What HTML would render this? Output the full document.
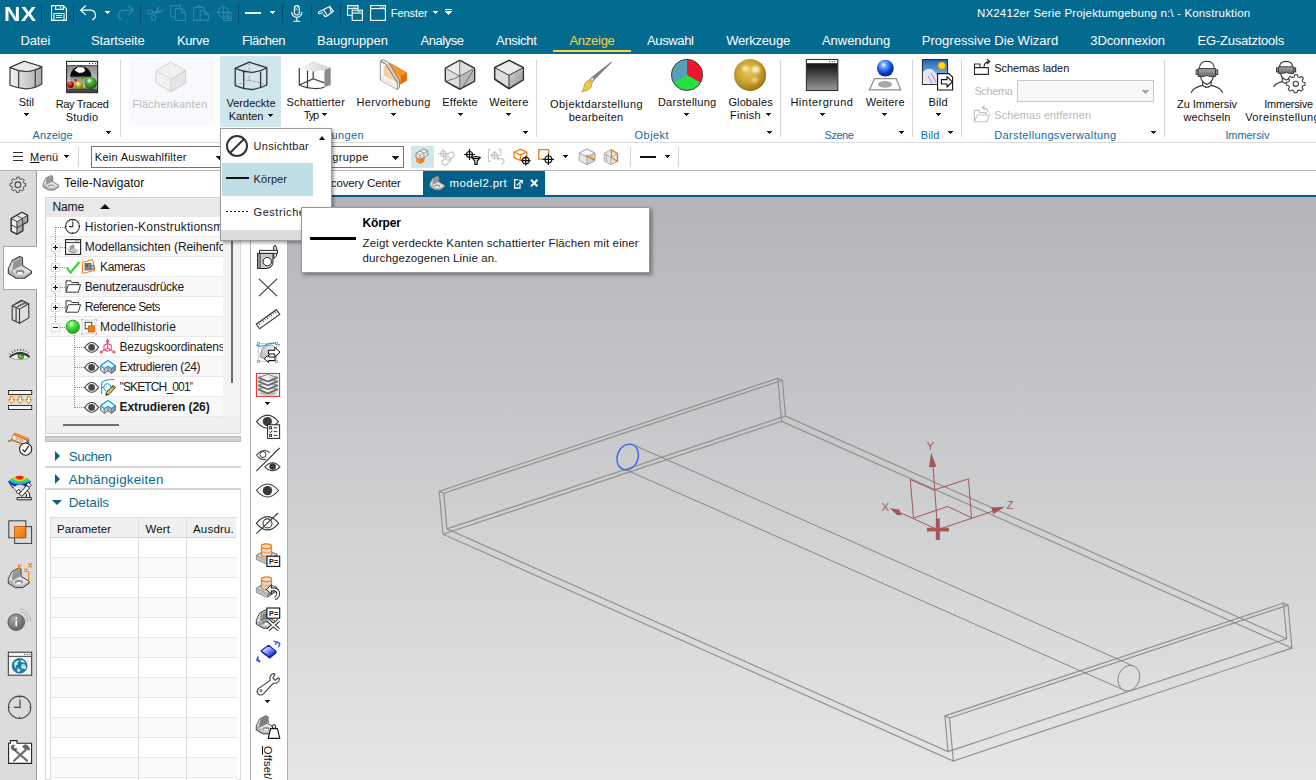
<!DOCTYPE html>
<html><head><meta charset="utf-8"><title>NX</title>
<style>
html,body{margin:0;padding:0;}
body{width:1316px;height:780px;overflow:hidden;position:relative;background:#fff;font-family:"Liberation Sans",sans-serif;}
.t{position:absolute;white-space:pre;line-height:20px;height:20px;font-family:"Liberation Sans",sans-serif;z-index:5;}
.a{position:absolute;}
svg{position:absolute;overflow:visible;}
.dn{position:absolute;width:5px;height:3px;z-index:5;background:linear-gradient(var(--c,#1a1a1a),var(--c,#1a1a1a)) 0 0/5px 1px no-repeat,linear-gradient(var(--c,#1a1a1a),var(--c,#1a1a1a)) 1px 1px/3px 1px no-repeat,linear-gradient(var(--c,#1a1a1a),var(--c,#1a1a1a)) 2px 2px/1px 1px no-repeat;}
.dn7{position:absolute;width:7px;height:4px;z-index:5;background:linear-gradient(var(--c,#1a1a1a),var(--c,#1a1a1a)) 0 0/7px 1px no-repeat,linear-gradient(var(--c,#1a1a1a),var(--c,#1a1a1a)) 1px 1px/5px 1px no-repeat,linear-gradient(var(--c,#1a1a1a),var(--c,#1a1a1a)) 2px 2px/3px 1px no-repeat,linear-gradient(var(--c,#1a1a1a),var(--c,#1a1a1a)) 3px 3px/1px 1px no-repeat;}
.vs{position:absolute;width:1px;background:#d4d4d4;top:60px;height:77px;}

</style></head>
<body>
<!-- header -->
<div class="a" style="left:0;top:0;width:1316px;height:54px;background:#036a90;"></div>
<div class="a" style="left:553px;top:50px;width:78px;height:2px;background:#fdd23e;"></div>
<!-- ribbon -->
<div class="a" style="left:0;top:54px;width:1316px;height:88px;background:#fff;"></div>
<div class="a" style="left:0;top:142px;width:1316px;height:1px;background:#dcdcdc;"></div>
<div class="a" style="left:129px;top:57px;width:86px;height:68px;background:#f8f9fd;"></div>
<div class="a" style="left:220px;top:56px;width:61px;height:71px;background:#cfe6ec;"></div>
<div class="vs" style="left:120px"></div><div class="vs" style="left:536px"></div><div class="vs" style="left:780px"></div>
<div class="vs" style="left:912px"></div><div class="vs" style="left:961px"></div><div class="vs" style="left:1164px"></div>
<!-- schema combobox -->
<div class="a" style="left:1017px;top:80px;width:137px;height:22px;border:1px solid #c8c8c8;background:#f7f7f7;box-sizing:border-box;"></div>
<div class="dn7" style="left:1142px;top:90px;--c:#a8a8a8;"></div>
<!-- toolbar row -->
<div class="a" style="left:78px;top:147px;width:1px;height:20px;background:#d4d4d4;"></div>
<div class="a" style="left:91px;top:146px;width:140px;height:22px;border:1px solid #747474;box-sizing:border-box;background:#fff;"></div>
<div class="a" style="left:300px;top:146px;width:104px;height:22px;border:1px solid #747474;box-sizing:border-box;background:#fff;"></div>
<div class="dn7" style="left:392px;top:156px;"></div>
<div class="dn7" style="left:216px;top:156px;"></div>
<div class="a" style="left:411px;top:146px;width:23px;height:22px;background:#cfe6ec;"></div>
<div class="a" style="left:630px;top:147px;width:1px;height:20px;background:#d4d4d4;"></div>
<div class="a" style="left:678px;top:147px;width:1px;height:20px;background:#d4d4d4;"></div>
<div class="a" style="left:640px;top:155.5px;width:16px;height:2.5px;background:#111;"></div>
<div class="dn" style="left:665px;top:155px;"></div>
<div class="dn" style="left:563px;top:155px;"></div>
<div class="dn" style="left:64px;top:155px;"></div>
<!-- hamburger -->
<div class="a" style="left:13px;top:152px;width:10px;height:1px;background:#333;"></div>
<div class="a" style="left:13px;top:156px;width:10px;height:1px;background:#333;"></div>
<div class="a" style="left:13px;top:160px;width:10px;height:1px;background:#333;"></div>
<!-- separator under toolbar -->
<div class="a" style="left:0;top:170px;width:1316px;height:1px;background:#b4b4b4;"></div>
<!-- left resource bar -->
<div class="a" style="left:0;top:171px;width:36px;height:609px;background:#dcdcdc;border-right:1px solid #9a9a9a;"></div>
<div class="a" style="left:3px;top:246px;width:34px;height:44px;background:#fff;border:1px solid #a8a8a8;border-right:none;box-sizing:border-box;"></div>
<!-- navigator -->
<div class="a" style="left:37px;top:171px;width:206px;height:609px;background:#fff;"></div>
<!-- tree widget -->
<div class="a" style="left:45px;top:197px;width:196px;height:237px;background:#f0f0f0;border:1px solid #d6d6d6;box-sizing:border-box;"></div>
<div class="a" style="left:46px;top:198px;width:194px;height:19px;background:#e9e9e9;border-bottom:1px solid #d0d0d0;"></div>
<div class="a" style="left:46px;top:217px;width:177px;height:200px;background:repeating-linear-gradient(to bottom,#fff 0,#fff 19px,#e9e9e9 19px,#e9e9e9 20px,#f8f8f8 20px,#f8f8f8 39px,#e9e9e9 39px,#e9e9e9 40px);"></div>
<div class="a" style="left:223px;top:217px;width:17px;height:200px;background:#f3f3f3;"></div>
<div class="a" style="left:231px;top:241px;width:2px;height:142px;background:#6e6e6e;"></div>
<div class="a" style="left:63px;top:424px;width:56px;height:2px;background:#6e6e6e;"></div>
<div class="a" style="left:45px;top:436px;width:196px;height:6px;background:#d2d2d2;border:1px solid #bdbdbd;box-sizing:border-box;"></div>
<!-- sort arrow -->
<div class="a" style="left:100px;top:204px;width:0;height:0;border-left:5px solid transparent;border-right:5px solid transparent;border-bottom:5px solid #111;"></div>
<!-- sections -->
<div class="a" style="left:45px;top:466px;width:196px;height:2px;background:#d6d6d6;"></div>
<div class="a" style="left:45px;top:488px;width:196px;height:2px;background:#d6d6d6;"></div>
<div class="a" style="left:45px;top:490px;width:196px;height:290px;border:1px solid #dcdcdc;border-top:none;box-sizing:border-box;"></div>
<div class="a" style="left:55px;top:451px;width:0;height:0;border-top:5px solid transparent;border-bottom:5px solid transparent;border-left:5px solid #0f5f85;"></div>
<div class="a" style="left:55px;top:474px;width:0;height:0;border-top:5px solid transparent;border-bottom:5px solid transparent;border-left:5px solid #0f5f85;"></div>
<div class="a" style="left:52px;top:500px;width:0;height:0;border-left:5px solid transparent;border-right:5px solid transparent;border-top:5px solid #0f5f85;"></div>
<!-- details table -->
<div class="a" style="left:50px;top:517px;width:187px;height:263px;border:1px solid #dedede;border-bottom:none;border-right:none;box-sizing:border-box;
 background:repeating-linear-gradient(to bottom,#fff 0,#fff 19px,#e9e9e9 19px,#e9e9e9 20px,#fafafa 20px,#fafafa 39px,#e9e9e9 39px,#e9e9e9 40px);background-position:0 20px;"></div>
<div class="a" style="left:51px;top:518px;width:185px;height:19px;background:#f0f0f0;border-bottom:1px solid #d6d6d6;"></div>
<div class="a" style="left:138px;top:518px;width:1px;height:262px;background:#dedede;"></div>
<div class="a" style="left:186px;top:518px;width:1px;height:262px;background:#dedede;"></div>
<!-- gap + vertical toolbar -->
<div class="a" style="left:243px;top:171px;width:7px;height:609px;background:#fff;"></div>
<div class="a" style="left:250px;top:171px;width:37px;height:609px;background:#fff;border-left:1px solid #b0b0b0;box-sizing:border-box;"></div>
<div class="a" style="left:287px;top:197px;width:1px;height:583px;background:#f0a070;"></div>
<!-- tab row -->
<div class="a" style="left:288px;top:171px;width:1028px;height:24px;background:#fff;"></div>
<div class="a" style="left:423px;top:171px;width:122px;height:25px;background:#015f88;"></div>
<div class="a" style="left:288px;top:195px;width:1028px;height:2px;background:#015f88;"></div>
<div class="a" style="left:288px;top:197px;width:1028px;height:1px;background:#f0a070;"></div>
<!-- viewport -->
<div class="a" id="vp" style="left:288px;top:198px;width:1028px;height:582px;background:linear-gradient(to bottom,#b3b5b8 0%,#e5e6e7 100%);"></div>
<!-- dropdown -->
<div class="a" style="left:220px;top:128px;width:112px;height:113px;background:#fff;border:1px solid #9a9a9a;box-sizing:border-box;z-index:20;box-shadow:2px 2px 3px rgba(0,0,0,0.35);"></div>
<div class="a" style="left:221px;top:230px;width:110px;height:10px;background:#dcdcdc;z-index:20;"></div>
<div class="a" style="left:222px;top:163px;width:91px;height:33px;background:#bfdfe7;z-index:20;"></div>
<div class="a" style="left:226px;top:177px;width:23px;height:2px;background:#111;z-index:21;"></div>
<div class="a" style="left:226px;top:211px;width:23px;height:1px;background:repeating-linear-gradient(to right,#222 0,#222 2px,transparent 2px,transparent 4px);z-index:21;"></div>
<div class="a" style="left:319px;top:136px;width:0;height:0;border-left:3.5px solid transparent;border-right:3.5px solid transparent;border-bottom:4px solid #111;z-index:21;"></div>
<svg style="left:225px;top:134px;z-index:21" width="24" height="24" viewBox="0 0 24 24"><circle cx="12" cy="12" r="10" fill="none" stroke="#333" stroke-width="2"/><line x1="5" y1="19" x2="19" y2="5" stroke="#333" stroke-width="2"/></svg>
<!-- tooltip -->
<div class="a" style="left:301px;top:207px;width:349px;height:66px;background:#fff;border:1px solid #9a9a9a;box-sizing:border-box;z-index:30;box-shadow:2px 2px 4px rgba(0,0,0,0.4);"></div>
<div class="a" style="left:310px;top:237px;width:46px;height:3px;background:#000;z-index:31;"></div>
<svg style="left:0;top:0;z-index:2" width="1316" height="780" viewBox="0 0 1316 780">
<g fill="none" stroke="#8e8e8e" stroke-width="1.15">
<polygon points="439.2,491.2 443.8,493.2 446.9,528.9 948.0,751.6 944.9,715.9 949.5,718.0 953.3,761.0 443.0,534.2"/>
<polygon points="777.8,378.3 782.4,380.3 785.5,416.0 1286.7,638.7 1283.5,603.0 1288.1,605.1 1291.9,648.1 781.6,421.3"/>
<line x1="439.2" y1="491.2" x2="777.8" y2="378.3"/>
<line x1="443.8" y1="493.2" x2="782.4" y2="380.3"/>
<line x1="446.9" y1="528.9" x2="785.5" y2="416.0"/>
<line x1="948.0" y1="751.6" x2="1286.7" y2="638.7"/>
<line x1="944.9" y1="715.9" x2="1283.5" y2="603.0"/>
<line x1="949.5" y1="718.0" x2="1288.1" y2="605.1"/>
<line x1="953.3" y1="761.0" x2="1291.9" y2="648.1"/>
<line x1="443.0" y1="534.2" x2="781.6" y2="421.3"/>
</g>
<g fill="none" stroke="#7d7d7d" stroke-width="0.9">
<line x1="634.2" y1="445.2" x2="1133.3" y2="666.0"/>
<line x1="625.6" y1="469.6" x2="1125.7" y2="690.9"/>
<ellipse cx="1128.8" cy="678.2" rx="10.6" ry="13.2" transform="rotate(20 1128.8 678.2)" stroke="#858585"/>
</g>
<ellipse cx="627.7" cy="457" rx="10.4" ry="13.2" transform="rotate(20 627.7 457)" fill="none" stroke="#2f63f0" stroke-width="1.3"/>
<g fill="none" stroke="#a45656" stroke-width="1">
<polyline points="910.3,479.5 933.8,490.0 968.5,478.9"/>
<polyline points="910.3,479.5 913.5,518.0 947.7,506.5 971.5,517.7 968.5,478.9"/>
<line x1="933.1" y1="467" x2="937.4" y2="527"/>
<line x1="900.5" y1="512.8" x2="937.7" y2="529.7"/>
<line x1="937.7" y1="529.7" x2="992.5" y2="511.3"/>
</g>
<g fill="#a45656" stroke="none">
<polygon points="931.2,452.8 929.0,467.2 936.4,466.8"/>
<polygon points="889.8,508.3 899.2,509.6 901.6,515.2 897,515.0"/>
<polygon points="1004.8,506.8 991.2,507.4 993.2,514.2"/>
<rect x="926.9" y="527.8" width="22" height="3.6"/>
<rect x="935.8" y="518.5" width="4" height="21.5"/>
</g>
</svg><!-- title bar icons -->
<div class="a" style="left:41px;top:4px;width:1px;height:19px;background:#034d6b;"></div>
<div class="a" style="left:73px;top:4px;width:1px;height:19px;background:#034d6b;"></div>
<div class="a" style="left:140px;top:4px;width:1px;height:19px;background:#034d6b;"></div>
<div class="a" style="left:238px;top:4px;width:1px;height:19px;background:#034d6b;"></div>
<div class="a" style="left:282px;top:4px;width:1px;height:19px;background:#034d6b;"></div>
<div class="a" style="left:311px;top:4px;width:1px;height:19px;background:#034d6b;"></div>
<div class="a" style="left:340px;top:4px;width:1px;height:19px;background:#034d6b;"></div>
<!-- save -->
<svg style="left:51px;top:5px" width="16" height="16" viewBox="0 0 16 16" fill="none" stroke="#fff" stroke-width="1.1">
<path d="M0.6 0.6H12.2L15.4 3.8V15.4H0.6Z"/><path d="M4.6 0.6V4.4H12.4V0.8"/><path d="M9.6 1.6V3.6" stroke-width="1"/><path d="M3 15.4V8.5H13V15.4"/><path d="M5 10.5H11M5 12.5H11" stroke-width="1"/></svg>
<!-- undo -->
<svg style="left:80px;top:5px" width="16" height="16" viewBox="0 0 16 16" fill="none" stroke="#fff" stroke-width="1.2" stroke-linecap="round" stroke-linejoin="round">
<path d="M5.4 0.8L0.8 5.2L5.4 9.6"/><path d="M1 5.2H10.4A5 5 0 0 1 12.8 14.6"/></svg>
<div class="dn" style="left:105px;top:11px;--c:#fff;"></div>
<!-- redo dim -->
<svg style="left:118px;top:5px" width="16" height="16" viewBox="0 0 16 16" fill="none" stroke="#3a8fb0" stroke-width="1.1" stroke-linecap="round" stroke-linejoin="round">
<path d="M10.6 0.8L15.2 5.2L10.6 9.6"/><path d="M15 5.2H5.6A5 5 0 0 0 3.2 14.6"/></svg>
<!-- scissors dim -->
<svg style="left:147px;top:5px" width="16" height="16" viewBox="0 0 16 16" fill="none" stroke="#2f88aa" stroke-width="1.1">
<ellipse cx="3" cy="7" rx="2.6" ry="2"/><ellipse cx="6.6" cy="12.6" rx="2" ry="2.6"/><path d="M5.4 7.2L15.4 5.6L9 9"/><path d="M7.4 10.2L12 0.8L9.6 8"/></svg>
<!-- copy dim -->
<svg style="left:170px;top:5px" width="16" height="16" viewBox="0 0 16 16" fill="none" stroke="#2f88aa" stroke-width="1.1">
<path d="M5.4 11.8H0.6V0.6H10.4V3"/><path d="M5.4 3.6H12L15.4 7V15.4H5.4Z"/><path d="M11.6 3.8V7.4H15.2"/></svg>
<!-- paste dim -->
<svg style="left:193px;top:5px" width="16" height="16" viewBox="0 0 16 16" fill="none" stroke="#2f88aa" stroke-width="1.1">
<path d="M7.2 15.4H0.6V2.6H10.8V5.6"/><path d="M3 2.6L4 1.2H5L5.8 0.4L6.6 1.2H7.6L8.6 2.6"/><path d="M7.2 5.8H12L15.4 9.2V15.4H7.2Z"/><path d="M11.8 6V9.4H15.2"/></svg>
<!-- target dim -->
<svg style="left:216px;top:5px" width="16" height="16" viewBox="0 0 16 16" fill="none" stroke="#2f88aa" stroke-width="1.1">
<circle cx="7.4" cy="7.4" r="5.2"/><path d="M7.4 0.2V12.6M0.2 7.4H12.6"/><path d="M7.6 7.6H15.4V15.4H7.6Z"/><path d="M9.6 9.6L13.4 13.4M13.4 10.6V13.4H10.6"/></svg>
<!-- line + arrow -->
<div class="a" style="left:245px;top:11.5px;width:16px;height:2.5px;background:#fff;"></div>
<div class="dn" style="left:270px;top:11px;--c:#fff;"></div>
<!-- mic -->
<svg style="left:289px;top:4.5px" width="16" height="17" viewBox="0 0 16 17" fill="none" stroke="#fff" stroke-width="1.1" stroke-linecap="round">
<rect x="5.3" y="0.6" width="5" height="9.4" rx="2.5"/><path d="M2.8 7.4A4.9 4.9 0 0 0 12.8 7.4"/><path d="M7.8 12.4V16M4.8 16.2H10.8"/><path d="M6.6 3h0.1M8.2 3h0.1M6.6 5h0.1M8.2 5h0.1M7.4 4h0.1" stroke-width="0.8"/></svg>
<!-- touch pen -->
<svg style="left:318px;top:6px" width="16" height="12" viewBox="0 0 16 12" fill="none" stroke="#fff" stroke-width="1.1" stroke-linejoin="round">
<path d="M5.6 3.4L11.8 0.6L15.4 5.2L9.2 9.8Z"/><path d="M11.8 0.8L13.2 6.8"/><path d="M5.8 3.6L1 5.8C-0.4 7 1 8.4 2.6 7.4L5 6.4"/><path d="M5.4 8.4L7.2 10.8L9.2 9.8"/></svg>
<!-- cascade windows -->
<svg style="left:347px;top:5px" width="16" height="16" viewBox="0 0 16 16" fill="none" stroke="#fff" stroke-width="1.1">
<path d="M5 10.2H0.6V0.6H11V5"/><path d="M0.6 3.4H11"/><rect x="5.2" y="5.2" width="10.2" height="10.2"/><path d="M5.2 8H15.4"/><path d="M6.2 2h3M10.6 6.6h3.4" stroke-width="0.9" stroke-dasharray="1 0.6"/></svg>
<!-- window -->
<svg style="left:370px;top:5px" width="16" height="16" viewBox="0 0 16 16" fill="none" stroke="#fff" stroke-width="1.1">
<rect x="0.6" y="0.6" width="14.8" height="14.8"/><path d="M0.6 3.6H15.4"/><path d="M9.8 2.2h4.2" stroke-width="0.9" stroke-dasharray="1 0.6"/></svg>
<div class="dn" style="left:433px;top:11px;--c:#fff;"></div>
<div class="a" style="left:445px;top:9px;width:7px;height:1px;background:#fff;"></div>
<div class="dn7" style="left:445px;top:11px;--c:#fff;"></div>
<svg style="left:0;top:0;z-index:3" width="1316" height="780" viewBox="0 0 1316 780">
<defs>
<linearGradient id="gBlk" x1="0" y1="0" x2="1" y2="0"><stop offset="0" stop-color="#f4f4f4"/><stop offset="1" stop-color="#ababab"/></linearGradient>
<linearGradient id="gTop" x1="0" y1="0" x2="1" y2="0"><stop offset="0" stop-color="#f6f6f6"/><stop offset="1" stop-color="#d2d2d2"/></linearGradient>
<linearGradient id="gBg" x1="0" y1="0" x2="0" y2="1"><stop offset="0" stop-color="#0c0c0c"/><stop offset="0.25" stop-color="#222"/><stop offset="1" stop-color="#9a9a9a"/></linearGradient>
<linearGradient id="gRT" x1="0" y1="0" x2="0" y2="1"><stop offset="0" stop-color="#7c7c7c"/><stop offset="0.65" stop-color="#c4c4c4"/><stop offset="1" stop-color="#6a6a6a"/></linearGradient>
<radialGradient id="gGold" cx="0.45" cy="0.4" r="0.6"><stop offset="0" stop-color="#e6c65a"/><stop offset="0.6" stop-color="#c9a233"/><stop offset="1" stop-color="#9a7414"/></radialGradient>
<radialGradient id="gBlue" cx="0.4" cy="0.3" r="0.7"><stop offset="0" stop-color="#ffffff"/><stop offset="0.25" stop-color="#6aa0ff"/><stop offset="0.7" stop-color="#0a3fd0"/><stop offset="1" stop-color="#06248a"/></radialGradient>
<radialGradient id="gGrn" cx="0.4" cy="0.3" r="0.7"><stop offset="0" stop-color="#ffffff"/><stop offset="0.3" stop-color="#5ab83a"/><stop offset="1" stop-color="#145a0a"/></radialGradient>
<radialGradient id="gYel" cx="0.4" cy="0.3" r="0.7"><stop offset="0" stop-color="#ffffd0"/><stop offset="0.35" stop-color="#cfc81e"/><stop offset="1" stop-color="#6a6400"/></radialGradient>
<radialGradient id="gRed" cx="0.4" cy="0.3" r="0.7"><stop offset="0" stop-color="#ff9090"/><stop offset="0.4" stop-color="#d01818"/><stop offset="1" stop-color="#700000"/></radialGradient>
<linearGradient id="gSky" x1="0" y1="0" x2="0" y2="1"><stop offset="0" stop-color="#1f63b8"/><stop offset="1" stop-color="#b8e0f8"/></linearGradient>
<linearGradient id="gVR" x1="0" y1="0" x2="0" y2="1"><stop offset="0" stop-color="#aaa"/><stop offset="1" stop-color="#666"/></linearGradient>
<linearGradient id="gCubeR" x1="0" y1="0" x2="1" y2="1"><stop offset="0" stop-color="#d8d8d8"/><stop offset="1" stop-color="#8e8e8e"/></linearGradient>
<filter id="bl" x="-50%" y="-50%" width="200%" height="200%"><feGaussianBlur stdDeviation="1.1"/></filter>
<linearGradient id="gSph" x1="0" y1="0" x2="0" y2="1"><stop offset="0" stop-color="#050505"/><stop offset="0.46" stop-color="#0a0a0a"/><stop offset="0.54" stop-color="#8a8a8a"/><stop offset="1" stop-color="#d2d2d2"/></linearGradient>
</defs>
<!-- Stil -->
<g stroke="#3a3a3a" stroke-width="1.2" stroke-linejoin="round">
<path d="M10 67.5L24.2 61.2L41.8 66.8V84Q34 88.8 26 88.8Q18 88.6 10 85.3Z" fill="url(#gBlk)"/>
<path d="M10 67.5Q18 71.2 26.5 71.5Q35 71 41.8 66.8" fill="none"/>
<path d="M10 67.5L24.2 61.2L41.8 66.8Q35 71 26.5 71.5Q18 71.2 10 67.5Z" fill="#e9e9e9"/>
<path d="M18.7 70.7V87.6M35.3 70.2V87" fill="none"/>
</g>
<!-- Ray traced studio -->
<rect x="66.6" y="61.4" width="31" height="31.2" fill="url(#gRT)" stroke="#333" stroke-width="1.2"/>
<rect x="67.2" y="62" width="29.8" height="3.4" fill="#fff"/>
<path d="M66.6 65.6H97.6" stroke="#333" stroke-width="0.8"/>
<circle cx="89.4" cy="63.6" r="0.6" fill="#222"/><circle cx="92.4" cy="63.6" r="0.6" fill="#222"/><circle cx="95.4" cy="63.6" r="0.6" fill="#222"/>
<path d="M67.2 89.2Q82 87.6 97 89.2V92H67.2Z" fill="#444"/>
<circle cx="80.8" cy="76.8" r="10.6" fill="url(#gSph)"/>
<path d="M74.9 70.2L78.1 67.5L83.5 67.8L84.9 70.4L83.5 71.9L79.1 72.6Z" fill="#fff" stroke="#fff" stroke-width="0.8" stroke-linejoin="round"/>
<circle cx="90.7" cy="83.2" r="6.2" fill="url(#gGrn)"/>
<circle cx="78.9" cy="85.4" r="4.1" fill="url(#gYel)"/>
<circle cx="70.6" cy="84.8" r="3.3" fill="url(#gRed)"/>
<circle cx="75.8" cy="80.3" r="1.3" fill="#b02828"/><circle cx="80.2" cy="78.8" r="1.5" fill="#a8a020"/><circle cx="83.1" cy="77.5" r="1.4" fill="#3a8a22"/>
<!-- Flaechenkanten (dim cube) -->
<g stroke="#d2d2d2" stroke-width="1" stroke-linejoin="round">
<path d="M170.8 62L185.6 70.5V83L170.8 91.6L156 83V70.5Z" fill="#f1f1f1"/>
<path d="M170.8 79.4V91.6L185.6 83V70.5Z" fill="#e6e6e6"/>
<path d="M156 70.5L170.8 79.4L185.6 70.5" fill="none"/>
</g>
<!-- Verdeckte Kanten -->
<g fill="none" stroke="#333" stroke-width="1.3" stroke-linejoin="round">
<path d="M235.2 68.3L249.2 62.2L266.8 67.7V85Q260 88.6 251.4 89.5Q243 89 235.2 85.6Z"/>
<path d="M235.2 68.3Q243 71.8 251.4 72.4Q260 72 266.8 67.7"/>
<path d="M243.7 71.6V88.4M260.6 71.4V87.9"/>
</g>
<g fill="none" stroke="#b48a8a" stroke-width="1" stroke-dasharray="2.2 2">
<path d="M249.2 63.5V80"/><path d="M249.2 80L236 85.2"/><path d="M249.2 80L266 84.6"/>
</g>
<!-- Schattierter Typ -->
<path d="M324.4 70.1L330.7 67.4V85L324.4 87.2Z" fill="#8c8c8c"/>
<path d="M299.3 67.9L313 61.3L330.7 67.4Q324 70.6 316.2 71.3Q307 70.8 299.3 67.9Z" fill="url(#gTop)"/>
<g fill="none" stroke="#3a3a3a" stroke-width="1.2">
<path d="M299.3 67.9V85Q307 88.4 316 88.6Q321 88.4 324.4 87.2"/>
<path d="M307.5 70.6V87.5"/><path d="M313.2 71.2V78.8L299.3 85M313.2 78.8L324.4 82.9"/>
</g>
<!-- Hervorhebung -->
<path d="M384 67L390.1 63.3L406.7 72.8V80.4L400.6 84L384 75Z" fill="#f08a1c"/>
<path d="M400.6 75.8L406.7 72.8V80.4L400.6 84Z" fill="#e06c06"/>
<path d="M390.1 63.3L406.7 72.8L400.6 75.8L384 67Z" fill="#f59420"/>
<path d="M384 67L400.6 75.8V84L384 75Z" fill="#f2a040"/>
<path d="M384 67L390.1 63.3L406.7 72.8V80.4L400.6 84L384 75Z" fill="none" stroke="#e07810" stroke-width="0.6"/>
<path d="M380.3 61.1L386 64.4L397.4 82.6L397 89.4L380.3 80.1Z" fill="#f6f4ee" fill-opacity="0.6" stroke="#8c8c8c" stroke-width="0.9" stroke-linejoin="round"/>
<path d="M380.3 61.1L383.3 59.7L389.1 63L399.6 81V87.4L397 89.4L397.4 82.6L386 64.4Z" fill="#dcdcdc" fill-opacity="0.75" stroke="#7c7c7c" stroke-width="0.9" stroke-linejoin="round"/>
<path d="M381 80.4L397 89.2L397.3 84.5Q389 80 381 76Z" fill="#ececec" opacity="0.9"/>
<!-- Effekte -->
<g stroke="#333" stroke-width="1.2" stroke-linejoin="round">
<path d="M459.7 60.3L474.6 68.2V81.3L459.7 89.1L445.4 81.3V68.2Z" fill="#dedede"/>
<path d="M459.7 76.1L474.6 68.2V81.3L459.7 89.1Z" fill="#b9b9b9" stroke="none"/>
<path d="M445.4 68.2L459.7 76.1L459.7 60.3Z" fill="#ececec" stroke="none"/>
<path d="M459.7 60.3L474.6 68.2V81.3L459.7 89.1L445.4 81.3V68.2Z" fill="none"/>
</g>
<g fill="none" stroke="#666" stroke-width="0.9">
<path d="M459.7 60.3V76.1M445.4 68.2L459.7 76.1L474.6 68.2M459.7 76.1V89.1M445.4 81.3Q455 79 459.7 76.1M462 88L473.5 70"/>
</g>
<!-- Weitere cube -->
<g stroke="#333" stroke-width="1.3" stroke-linejoin="round">
<path d="M509 60.3L523.4 67.6V79.7L509 88.6L494.6 79.1V67.6Z" fill="#dcdcdc"/>
<path d="M509 75.2L523.4 67.6V79.7L509 88.6Z" fill="url(#gCubeR)" stroke="none"/>
<path d="M509 60.3L523.4 67.6L509 75.2L494.6 67.6Z" fill="#ececec" stroke="none"/>
<path d="M509 60.3L523.4 67.6V79.7L509 88.6L494.6 79.1V67.6Z" fill="none"/>
<path d="M494.6 67.6L509 75.2L523.4 67.6M509 75.2V88.6" fill="none" stroke-width="1"/>
</g>
<!-- Brush -->
<path d="M611.5 62L594.6 79.2L592.2 82.2L589.6 79.6L592.4 77Z" fill="#8a8a8a" stroke="#555" stroke-width="0.7"/>
<path d="M594.6 79.2L592.2 82.2L589.6 79.6L592.4 77Z" fill="#d8d8d8" stroke="#666" stroke-width="0.6"/>
<path d="M589.8 79.8L592 82Q592.6 88 586.8 90.6Q583.6 91.8 581.4 91.6Q584 89.8 584 86.4Q584.6 81.4 589.8 79.8Z" fill="#eac84a" stroke="#b89424" stroke-width="0.7"/>
<!-- Pie -->
<circle cx="687" cy="74.9" r="15.6" fill="#55a0b8"/>
<path d="M687 74.9V59.3A15.6 15.6 0 0 1 700.5 82.7Z" fill="#f3132f"/>
<path d="M687 74.9L700.5 82.7A15.6 15.6 0 0 1 673.5 82.7Z" fill="#25e03e"/>
<circle cx="687" cy="74.9" r="15.6" fill="none" stroke="#454545" stroke-width="1"/>
<!-- Gold sphere -->
<circle cx="750.1" cy="74.9" r="16" fill="url(#gGold)"/>
<ellipse cx="745.6" cy="68.6" rx="3.4" ry="2.8" fill="#f8ecb0" opacity="0.9" filter="url(#bl)"/>
<ellipse cx="755.6" cy="69.4" rx="4" ry="3.4" fill="#faf0b8" opacity="0.95" filter="url(#bl)"/>
<ellipse cx="754.6" cy="79.8" rx="3" ry="2.6" fill="#f2dc8c" opacity="0.85" filter="url(#bl)"/>
<!-- Hintergrund -->
<rect x="806.4" y="59.5" width="31.4" height="31" fill="url(#gBg)" stroke="#333" stroke-width="1.1"/>
<rect x="807" y="60" width="30.2" height="3.2" fill="#fff"/>
<circle cx="829.6" cy="61.6" r="0.55" fill="#222"/><circle cx="832.2" cy="61.6" r="0.55" fill="#222"/><circle cx="834.8" cy="61.6" r="0.55" fill="#222"/>
<!-- Weitere (scene) -->
<path d="M874.5 78.6H896.2L900.7 89.9H869.4Z" fill="#fff" stroke="#8c8c8c" stroke-width="1.2"/>
<ellipse cx="885" cy="84.4" rx="7" ry="3.3" fill="#a8a8a8"/>
<circle cx="885.3" cy="68.2" r="8.4" fill="url(#gBlue)"/>
<!-- Bild -->
<rect x="922.4" y="59.6" width="25.2" height="24.8" fill="url(#gSky)" stroke="#222" stroke-width="1"/>
<path d="M922.9 72Q928 67 932 69.6Q936 72 938 78V84H922.9Z" fill="#e8e4f6"/>
<path d="M928 76L932 83M931 73L936 82" stroke="#8a86b8" stroke-width="0.9"/>
<circle cx="941.8" cy="65.7" r="3.6" fill="#ffe000" stroke="#f09000" stroke-width="0.9"/>
<path d="M937.6 73.6H949L952.6 77.2V90H937.6Z" fill="#fff" stroke="#111" stroke-width="1.1"/>
<path d="M941.4 79.6H947V76.6L952.4 81.8L947 87V84H941.4Z" fill="#fff" stroke="#111" stroke-width="1.1" stroke-linejoin="round"/>
<!-- Schemas laden icon -->
<g fill="none" stroke="#2a2a2a" stroke-width="1.1">
<path d="M974.5 67.6V64H980V67.6"/><path d="M974.5 67.6H988.4V74.4H974.5Z"/>
<path d="M984 67.2Q984 62 989.2 61.6M986.8 59.2L989.8 61.5L987 64"/>
</g>
<!-- Schemas entfernen icon (dim) -->
<g fill="none" stroke="#c4c4c4" stroke-width="1.1">
<path d="M974.4 121.8V110.4H979.4V112.6H986V115"/><path d="M974.4 121.8L977.2 115H989.6L986.8 121.8Z"/>
<path d="M988.2 112.6Q987.8 108 982.6 107.6M984.8 105.4L982 107.6L984.8 110"/>
</g>
<!-- VR person 1 -->
<g fill="none" stroke="#3a3a3a" stroke-width="1.1" stroke-linecap="round">
<path d="M1199.4 68.6Q1199.6 61.4 1206.8 61.2Q1214 61.4 1214.4 68.6"/>
<path d="M1200.6 76.6Q1201 81.6 1206.8 84.6Q1212.8 81.6 1213.2 76.6"/>
<path d="M1202.6 81.2V85.4Q1193 87.4 1191.4 92.6M1211.2 81.2V85.4Q1220.6 87.4 1222.6 92.6"/>
<path d="M1202.6 85.4Q1206.8 89.4 1211.2 85.4"/>
<rect x="1196.2" y="70" width="1.8" height="4.4"/><rect x="1215.8" y="70" width="1.8" height="4.4"/>
</g>
<path d="M1198.2 68.6H1215.6V76.6H1210.4Q1206.9 74.4 1203.4 76.6H1198.2Z" fill="url(#gVR)" stroke="#3a3a3a" stroke-width="1"/>
<!-- VR person 2 with gear -->
<g fill="none" stroke="#3a3a3a" stroke-width="1.1" stroke-linecap="round">
<path d="M1279.6 66.8Q1279.8 61.6 1286 61.4Q1292.2 61.6 1292.6 66.8"/>
<path d="M1280.6 73.4Q1281 77.6 1286 80Q1289 79 1290 77.6"/>
<path d="M1282.2 77.6V81.6Q1275.4 83.2 1273.8 86.6M1282.2 81.6Q1284.4 83.6 1286.6 83"/>
<rect x="1276.6" y="68" width="1.6" height="3.8"/><rect x="1294" y="68" width="1.6" height="3.8"/>
</g>
<path d="M1278.4 66.8H1293.8V73.4H1289.4Q1286.1 71.6 1282.8 73.4H1278.4Z" fill="url(#gVR)" stroke="#3a3a3a" stroke-width="1"/>
<g transform="translate(1295.8 83.8)">
<circle r="7.2" fill="#fff" stroke="none"/>
<path id="gearp" d="M-1.5 -8.6H1.5L2 -6.3A6.5 6.5 0 0 1 3.7 -5.5L5.7 -6.9L7.8 -4.8L6.4 -2.8A6.5 6.5 0 0 1 7.1 -1L9.4 -0.5V2.5L7.1 3A6.5 6.5 0 0 1 6.2 4.7L7.4 6.7L5.2 8.7L3.3 7.4A6.5 6.5 0 0 1 1.5 8.1L1 10.4H-2L-2.5 8.1A6.5 6.5 0 0 1 -4.2 7.3L-6.2 8.6L-8.3 6.5L-7 4.6A6.5 6.5 0 0 1 -7.7 2.9L-10 2.4V-0.6L-7.7 -1.1A6.5 6.5 0 0 1 -6.9 -2.9L-8.2 -4.9L-6.1 -7L-4.1 -5.6A6.5 6.5 0 0 1 -2 -6.3Z" fill="#fff" stroke="#3a3a3a" stroke-width="1.1" stroke-linejoin="round" transform="translate(0.3 -0.9) scale(0.95)"/>
<circle cx="0" cy="0" r="2.6" fill="#fff" stroke="#3a3a3a" stroke-width="1.1"/>
</g>
</svg>
<div class="dn" style="left:24px;top:113px;"></div>
<div class="dn" style="left:391px;top:113px;"></div>
<div class="dn" style="left:458px;top:113px;"></div>
<div class="dn" style="left:506px;top:113px;"></div>
<div class="dn" style="left:684px;top:113px;"></div>
<div class="dn" style="left:820px;top:113px;"></div>
<div class="dn" style="left:882px;top:113px;"></div>
<div class="dn" style="left:936px;top:113px;"></div>
<div class="dn" style="left:268px;top:114px;"></div>
<div class="dn" style="left:322px;top:113px;"></div>
<div class="dn" style="left:766px;top:113px;"></div>
<div class="dn" style="left:106px;top:131px;"></div>
<div class="dn" style="left:523px;top:131px;"></div>
<div class="dn" style="left:767px;top:131px;"></div>
<div class="dn" style="left:899px;top:131px;"></div>
<div class="dn" style="left:948px;top:131px;"></div>
<div class="dn" style="left:1151px;top:131px;"></div>
<svg style="left:0;top:0;z-index:3" width="1316" height="780" viewBox="0 0 1316 780">
<!-- tb icon1: boxes -->
<g stroke-linejoin="round">
<path d="M416 157.5L420.1 155.4L424.4 157.3V161.5L420.1 163.9L416 161.8Z" fill="#f07c0c"/>
<path d="M416 157.5L420.1 159.5V163.9L416 161.8Z" fill="#f59a3a"/>
<path d="M416 157.5L420.1 155.4L424.4 157.3L420.1 159.5Z" fill="#f6c08a"/>
<path d="M416 153.1L423.8 148.9L427.8 151V155.4L424.4 157.3L420.1 159.5L416 157.5Z" fill="#fff" fill-opacity="0.35" stroke="#7c7c7c" stroke-width="0.8"/>
<path d="M416 153.1L420.1 155.4L427.8 151M420.1 155.4V159.5M419.9 151L424 153.3V157.3" fill="none" stroke="#8a8a8a" stroke-width="0.7"/>
</g>
<!-- tb icon2: dim crosshair + link -->
<g fill="none" stroke="#c6c6c6" stroke-width="1.1">
<circle cx="443.4" cy="153.6" r="2.8"/><path d="M443.4 148.6V158.6M438.4 153.6H448.4"/>
<rect x="445" y="153.4" width="9.6" height="5.4" rx="2.7" transform="rotate(-40 449.8 156.1)"/>
<rect x="441.6" y="158.4" width="9.6" height="5.4" rx="2.7" transform="rotate(-40 446.4 161.1)"/>
</g>
<!-- tb icon3: crosshair + funnel -->
<g fill="none" stroke="#111" stroke-width="1.2">
<circle cx="469.5" cy="154.5" r="3"/><path d="M469.5 149V160M464 154.5H475"/>
<path d="M471.9 157.6H480.2L477.2 161V164.4H474.9V161Z" fill="#fff" stroke-linejoin="round"/>
<ellipse cx="476" cy="157.6" rx="4.1" ry="1" fill="#fff"/>
</g>
<!-- tb icon4: dim brackets -->
<g fill="none" stroke="#c6c6c6" stroke-width="1.1">
<path d="M490.6 149.4H488.4V161.4H490.6M498.6 149.4H500.8V155.4"/>
<circle cx="494.6" cy="155.4" r="2.8"/><path d="M494.6 150.8V160M490 155.4H499.2"/>
<path d="M497.6 158.6H501.6Q504 159 504 161.6Q503.6 163.8 501 164M499.2 156.8L497.4 158.6L499.2 160.4"/>
</g>
<!-- tb icon5: orange cube + crosshair -->
<g fill="none" stroke="#f07c0c" stroke-width="1.3" stroke-linejoin="round">
<path d="M514 152L520.4 149.4L526.8 152V157.6L520.4 160.4L514 157.6ZM514 152L520.4 154.8L526.8 152M520.4 154.8V160.4" fill="#fff"/>
</g>
<g fill="none" stroke="#111" stroke-width="1.2"><circle cx="525.8" cy="160.6" r="3.3" fill="#fff"/><path d="M525.8 155.8V165.4M521 160.6H530.6"/></g>
<!-- tb icon6: orange square + crosshair -->
<path d="M548.6 154.4V149.6H538.8V159.2H543.4" fill="none" stroke="#f07c0c" stroke-width="1.3"/>
<g fill="none" stroke="#111" stroke-width="1.2"><circle cx="548.4" cy="159.4" r="3.4"/><path d="M548.4 153.8V165M542.8 159.4H554"/></g>
<!-- tb cube 1 -->
<g stroke="#a4a4a4" stroke-width="0.9" stroke-linejoin="round">
<path d="M579.2 153L587 149L594.8 153V160.6L587 164.8L579.2 160.6Z" fill="#e6e6e6"/>
<path d="M579.2 153L587 157L594.8 153L587 149Z" fill="#f6f6f6"/>
<path d="M587 157V164.8L594.8 160.6V153Z" fill="#d4d4d4"/>
</g>
<path d="M586 155.2L594.6 160" stroke="#f07c0c" stroke-width="1.5"/>
<!-- tb cube 2 -->
<g stroke="#a4a4a4" stroke-width="0.9" stroke-linejoin="round">
<path d="M604.2 153.4L611.4 149.6L617.8 153.4V161L610.8 164.8L604.2 161Z" fill="#e6e6e6"/>
<path d="M610.8 157.4V164.8M604.2 153.4L610.8 157.4L617.8 153.4" fill="none"/>
<path d="M606.4 154.8V162" fill="none"/>
</g>
<path d="M611.4 149.8L617.4 153.8V161.6L611.4 157.4Z" fill="none" stroke="#f07c0c" stroke-width="1.2"/>
</svg>
<svg style="left:0;top:0;z-index:3" width="1316" height="780" viewBox="0 0 1316 780">
<defs>
<linearGradient id="gPart" x1="0" y1="0" x2="1" y2="1"><stop offset="0" stop-color="#d4d4d4"/><stop offset="1" stop-color="#8e8e8e"/></linearGradient>
<linearGradient id="gOr" x1="0" y1="0" x2="1" y2="1"><stop offset="0" stop-color="#f9a838"/><stop offset="1" stop-color="#ee6e00"/></linearGradient>
<radialGradient id="gInfo" cx="0.35" cy="0.3" r="0.8"><stop offset="0" stop-color="#a8a8a8"/><stop offset="1" stop-color="#5c5c5c"/></radialGradient>
<radialGradient id="gRain" cx="0.5" cy="0.12" r="0.75"><stop offset="0" stop-color="#ff1010"/><stop offset="0.18" stop-color="#ff2a10"/><stop offset="0.3" stop-color="#ffe020"/><stop offset="0.45" stop-color="#30e030"/><stop offset="0.62" stop-color="#20c0e0"/><stop offset="0.8" stop-color="#1030e0"/><stop offset="1" stop-color="#0a1a90"/></radialGradient>
<symbol id="part" viewBox="0 0 24 23" overflow="visible">
<path d="M0.3 17.4V12.7L4.3 4.5L11.7 0.6L14.4 1.8L14.6 9.8L23.5 15.1V17.4L16.4 22.2H8.2Z" fill="#b4b4b4" stroke="#3c3c3c" stroke-width="1.1" stroke-linejoin="round"/>
<path d="M0.9 12.8L4.5 5L5.4 6.4L4.5 14.8L1.4 14Z" fill="#dcdcdc"/>
<path d="M5.2 6.2L12.9 2.4L13.5 9.5L4.3 14.8Z" fill="#949494"/>
<path d="M4.3 14.8L13.5 9.8L22.8 15.3L16.2 19.6H8.4Z" fill="#e0e0e0"/>
<ellipse cx="12" cy="16.2" rx="4.4" ry="2.4" fill="#8c8c8c"/>
<ellipse cx="12" cy="17.2" rx="3" ry="1.3" fill="#fff"/>
</symbol>
<symbol id="partS" viewBox="0 0 24 23" overflow="visible">
<path d="M0.3 17.4V12.7L4.3 4.5L11.7 0.6L14.4 1.8L14.6 9.8L23.5 15.1V17.4L16.4 22.2H8.2Z" fill="#b0b0b0" stroke="#767676" stroke-width="1.5" stroke-linejoin="round"/>
<path d="M0.9 12.8L4.5 5L5.4 6.4L4.5 14.8L1.4 14Z" fill="#dcdcdc"/>
<path d="M5.2 6.2L12.9 2.4L13.5 9.5L4.3 14.8Z" fill="#949494"/>
<path d="M4.3 14.8L13.5 9.8L22.8 15.3L16.2 19.6H8.4Z" fill="#e0e0e0"/>
<ellipse cx="12" cy="16.2" rx="4.4" ry="2.4" fill="#8c8c8c"/>
<ellipse cx="12" cy="17.2" rx="3" ry="1.3" fill="#fff"/>
</symbol>
</defs>
<!-- gear -->
<g transform="translate(17.9 184.8)">
<path d="M-1.5 -8.6H1.5L2 -6.3A6.5 6.5 0 0 1 3.7 -5.5L5.7 -6.9L7.8 -4.8L6.4 -2.8A6.5 6.5 0 0 1 7.1 -1L9.4 -0.5V2.5L7.1 3A6.5 6.5 0 0 1 6.2 4.7L7.4 6.7L5.2 8.7L3.3 7.4A6.5 6.5 0 0 1 1.5 8.1L1 10.4H-2L-2.5 8.1A6.5 6.5 0 0 1 -4.2 7.3L-6.2 8.6L-8.3 6.5L-7 4.6A6.5 6.5 0 0 1 -7.7 2.9L-10 2.4V-0.6L-7.7 -1.1A6.5 6.5 0 0 1 -6.9 -2.9L-8.2 -4.9L-6.1 -7L-4.1 -5.6A6.5 6.5 0 0 1 -2 -6.3Z" fill="none" stroke="#444" stroke-width="1.2" stroke-linejoin="round" transform="translate(0.24 -0.72) scale(0.8)"/>
<circle r="2.9" fill="none" stroke="#444" stroke-width="1.1"/>
</g>
<!-- cubes -->
<g stroke="#333" stroke-width="1.1" stroke-linejoin="round">
<path d="M11.2 218.4L22 212.2L27.6 215.3V221.7L22.8 224.5V230.7L16.9 234.3L11.2 231.2Z" fill="#ececec"/>
<path d="M16.9 221.7L27.6 215.3V221.7L22.8 224.5V230.7L16.9 234.3Z" fill="#a9a9a9" stroke="none"/>
<path d="M11.2 218.4L22 212.2L27.6 215.3L16.9 221.7Z" fill="#e6e6e6" stroke="none"/>
<path d="M11.2 218.4L22 212.2L27.6 215.3V221.7L22.8 224.5V230.7L16.9 234.3L11.2 231.2Z" fill="none"/>
<path d="M11.2 218.4L16.9 221.7L27.6 215.3M16.9 221.7V234.3M16.6 215.3L22.3 218.6L22.8 224.5M11.2 224.8L16.9 227.8L22.8 224.5" fill="none" stroke-width="0.9"/>
</g>
<use href="#part" x="8" y="256" width="24" height="23"/>
<!-- books -->
<g fill="none" stroke="#333" stroke-width="1.05" stroke-linejoin="round">
<path d="M12.2 305.7L21.5 300.3L28.8 303.7V317.9L19.5 323.2L12.2 319.8Z" fill="#dedede"/>
<path d="M12.2 305.7L16.1 307.4L19.5 309.1L28.8 303.7"/>
<path d="M16.1 307.4V321.6M19.5 309.1V323.2"/>
<path d="M16.1 307.4L25 302.2M14 304.8L22.6 300.9M18 306.4L26.8 302.9" stroke-width="0.8"/>
</g>
<!-- eye -->
<path d="M9.6 357.6Q19.6 350.4 29.6 357.6Q19.6 361.6 9.6 357.6Z" fill="#f4f4f4" stroke="#888" stroke-width="0.7"/>
<circle cx="21" cy="355.8" r="3.4" fill="#3f8f1c"/><circle cx="21" cy="355.8" r="1.6" fill="#cfe4c4"/><circle cx="21.4" cy="355.4" r="0.9" fill="#223"/>
<path d="M9.6 357.2Q19.6 348.8 29.6 356.8" fill="none" stroke="#2a2a2a" stroke-width="1.5"/>
<path d="M10.6 354.8L9.4 353.4M12.8 353L11.8 351.4M15.2 351.6L14.6 349.8M17.8 350.8L17.6 349M20.4 350.6L20.6 348.8M23 351L23.6 349.4M25.4 352L26.4 350.6M27.6 353.6L28.8 352.4" stroke="#2a2a2a" stroke-width="0.9"/>
<!-- bars with arrows -->
<rect x="8.5" y="390.5" width="23.2" height="4" fill="#f4f4f4" stroke="#333" stroke-width="1"/>
<rect x="8.5" y="405.5" width="23.2" height="4" fill="#f4f4f4" stroke="#333" stroke-width="1"/>
<g fill="#fff" stroke="#f07c0c" stroke-width="1" stroke-linejoin="round">
<path d="M10.3 396.4H12.9V399.6H14.7L11.6 403.6L8.5 399.6H10.3Z"/>
<path d="M18.9 396.4H21.5V399.6H23.3L20.2 403.6L17.1 399.6H18.9Z"/>
<path d="M27.5 396.4H30.1V399.6H31.9L28.8 403.6L25.7 399.6H27.5Z"/>
</g>
<!-- box with check -->
<path d="M8.2 441.4L12.2 439L11.8 440.8Z" fill="#fff" stroke="#444" stroke-width="0.7" stroke-linejoin="round"/>
<path d="M13.3 434.7L27.1 440.4L25.6 444.6L11.7 439.3Z" fill="#f4f4f4" stroke="#555" stroke-width="0.6" stroke-linejoin="round"/>
<path d="M14.8 432.4L29.2 438.3L27.1 440.4L13.3 434.7Z" fill="#f07c0c"/>
<path d="M16 433L30 438.8M15.2 433.8L28.6 439.4" stroke="#f8b070" stroke-width="0.5"/>
<path d="M11.7 439.3L25.6 444.6L25.2 445.9L11.2 440.7Z" fill="#f07c0c"/>
<path d="M27.1 440.4L29.2 438.3V443L26 446.4L25.6 444.6Z" fill="#6e6e6e"/>
<path d="M15.6 437.4L23.6 440.6M15.2 438.8L18 439.9M19.4 440.4L23 441.8" stroke="#8a8a8a" stroke-width="0.8"/>
<circle cx="25.6" cy="449.1" r="6.1" fill="#fff" stroke="#222" stroke-width="1.1"/>
<path d="M22.6 449.4L24.8 451.8L28.6 446.2" fill="none" stroke="#222" stroke-width="1.2"/>
<!-- rainbow surface + microscope -->
<path d="M8 481.6Q19.6 470 31.2 481.6Q29 484.6 26.4 487.6Q19.6 481 12.8 488.4Q10 485 8 481.6Z" fill="url(#gRain)"/>
<path d="M9.4 483.4L17 491.6L19.6 489.4" fill="#fff" stroke="#333" stroke-width="0.8"/>
<g fill="#fff" stroke="#222" stroke-width="1" stroke-linejoin="round">
<path d="M17 497.6H31.4V499.8H17Z"/>
<path d="M26.6 490.4Q30.4 492 29.6 497.6H26.2Q27.4 494 25 492.4Z"/>
<path d="M19 493.8L26.8 485.4L29.6 488L21.8 496.4Z"/>
<path d="M26.2 484.6L28.4 482.6L31.2 485.4L29.2 487.4Z"/>
<path d="M16.2 491.8L18.6 489.6L20.6 491.8L18.4 494Z"/>
</g>
<!-- orange squares -->
<rect x="8.8" y="520.8" width="17" height="17" fill="none" stroke="#3c3c3c" stroke-width="1"/>
<rect x="14.6" y="526.6" width="17" height="16.8" fill="none" stroke="#3c3c3c" stroke-width="1"/>
<rect x="14.4" y="526.4" width="11.2" height="11.2" fill="url(#gOr)" stroke="#d86000" stroke-width="0.8"/>
<!-- part with dims -->
<use href="#part" x="8" y="567.6" width="21.6" height="20.8"/>
<g fill="none" stroke="#f07c0c" stroke-width="1.1">
<path d="M18.6 564.4V569.6M18.6 567L21.6 564.6M18.6 567L21.6 569.4M28.7 571V582M24.4 568.6L27.4 571.8M27.4 568.6L24.4 571.8M28.4 563.4L31.8 567.4M31.8 563.4L28.4 567.4"/>
</g>
<!-- info -->
<circle cx="16.2" cy="622.2" r="8.3" fill="url(#gInfo)" stroke="#4a4a4a" stroke-width="0.8"/>
<rect x="15.5" y="620.2" width="1.5" height="6" fill="#fff"/><circle cx="16.2" cy="618" r="1" fill="#fff"/>
<g fill="none" stroke="#b4b4b4" stroke-width="1"><path d="M20.6 611.4Q27.4 614 28.2 621.4"/><path d="M20 608.4Q30 611.4 31 621.8"/></g>
<path d="M19 614.2Q24.6 616.4 25.4 622" fill="none" stroke="#8c8c8c" stroke-width="1"/>
<!-- browser globe -->
<rect x="8.3" y="652.2" width="23.4" height="23" fill="#f2f2f2" stroke="#333" stroke-width="1"/>
<path d="M8.3 656.4H31.7" stroke="#333" stroke-width="0.9"/>
<circle cx="24.6" cy="654.3" r="0.55" fill="#222"/><circle cx="27" cy="654.3" r="0.55" fill="#222"/><circle cx="29.4" cy="654.3" r="0.55" fill="#222"/>
<circle cx="19.6" cy="665.8" r="7.4" fill="#1a80a4" stroke="#0e5a78" stroke-width="0.7"/>
<g fill="#cfe8f2"><path d="M14.4 663Q15.6 660.6 18.2 660.2L19 661.6L17.4 662.6L17.8 664.2L16 665.4L16.4 667.6L15 667.8Q13.4 665.6 14.4 663Z"/><path d="M20.6 659.8Q23.6 660.2 25.2 662.4L23.6 663L22.6 662L21 662.4Z"/><path d="M21.4 664.6L24 664.2L26 665.4Q26.4 667.6 25.2 669.4L23.6 668.4L22 668.8L21 667Z"/><path d="M17.4 668.6L19.6 668.4L20.6 670L19.4 672.4Q17.6 672 17 670.6Z"/></g>
<path d="M12.4 665.8H26.8M19.6 658.6V673" stroke="#0e5a78" stroke-width="0.4" opacity="0.6"/>
<!-- clock -->
<circle cx="19.6" cy="707.3" r="11.2" fill="none" stroke="#444" stroke-width="1.1"/>
<path d="M20 699.6V707.4H13.8" fill="none" stroke="#444" stroke-width="1.2"/>
<path d="M19.6 696.2V698M19.6 716.6V718.4M8.4 707.3H10.2M29 707.3H30.8" stroke="#444" stroke-width="1"/>
<!-- tools folder -->
<path d="M8.6 763.4V743.2H10.4V740.6H17V743.2H31.6V763.4Z" fill="#fff" stroke="#222" stroke-width="1.1" stroke-linejoin="miter"/>
<g stroke="#6e6e6e" stroke-width="2.2" stroke-linecap="round"><path d="M14.6 750L27 760.6"/><path d="M26 749.6L14 760.8"/></g>
<path d="M11 746.6Q11 750.6 15 750.6Q16.6 750 17 748.4L14.6 748.8L13.4 747L14.6 745.2Q12 744.6 11 746.6Z" fill="#666" stroke="#333" stroke-width="0.5"/>
<path d="M22.4 746.4L25.4 744.6Q28.6 745.4 29.8 749.6L28.6 750.2Q27 747.6 24.6 748.6Z" fill="#666" stroke="#333" stroke-width="0.5"/>
</svg>
<svg style="left:0;top:0;z-index:4" width="1316" height="780" viewBox="0 0 1316 780">
<defs>
<radialGradient id="gBall" cx="0.4" cy="0.3" r="0.75"><stop offset="0" stop-color="#d8ffd0"/><stop offset="0.35" stop-color="#4ee048"/><stop offset="1" stop-color="#12a012"/></radialGradient>
<linearGradient id="gExt" x1="0" y1="0" x2="1" y2="0"><stop offset="0" stop-color="#e4e4e4"/><stop offset="0.5" stop-color="#bdbdbd"/><stop offset="1" stop-color="#8e8e8e"/></linearGradient>
<symbol id="eye" viewBox="0 0 15 11" overflow="visible">
<path d="M0.5 5.4Q7.4 -4.4 14.4 5.4Q7.4 15.2 0.5 5.4Z" fill="#fff" stroke="#444" stroke-width="1.1"/>
<circle cx="7.4" cy="5.4" r="3.4" fill="#484848"/>
</symbol>
<symbol id="extr" viewBox="0 0 16 14" overflow="visible">
<path d="M0.6 6L8 0.8L15.4 6V10.6L11.6 13.6L8 11L4.4 13.6L0.6 10.6Z" fill="url(#gExt)" stroke="#555" stroke-width="0.8" stroke-linejoin="round"/>
<path d="M4.4 8.6V13.6M11.6 8.6V13.6M8 6.6V11" stroke="#666" stroke-width="0.7"/>
<path d="M0.6 6L8 0.8L15.4 6L11.6 8.6L8 6.4L4.4 8.6Z" fill="#f6fbff" stroke="#18a0dc" stroke-width="1.2" stroke-linejoin="round"/>
</symbol>
<symbol id="plus" viewBox="0 0 9 9" overflow="visible">
<rect x="0.5" y="0.5" width="8" height="8" fill="#fff" stroke="#dcdcdc" stroke-width="1"/>
<path d="M2 4.5H7M4.5 2V7" stroke="#111" stroke-width="1"/>
</symbol>
<symbol id="folder" viewBox="0 0 16 13" overflow="visible">
<path d="M0.6 12.4V0.6H5.6L6.6 2.4H13.4V4.6" fill="none" stroke="#333" stroke-width="1"/>
<path d="M0.6 12.4L3 4.6H15.6L13.2 12.4Z" fill="#fff" stroke="#333" stroke-width="1" stroke-linejoin="round"/>
</symbol>
</defs>
<!-- dotted connectors -->
<g stroke="#8e8e8e" stroke-width="1" stroke-dasharray="1 1" fill="none">
<path d="M55.5 227V323"/><path d="M56 227.5H65"/>
<path d="M60 247.5H65M60 267.5H65M60 287.5H65M60 307.5H65M60 327.5H66"/>
<path d="M74.5 335V408"/><path d="M75 347.5H84M75 367.5H84M75 387.5H84M75 407.5H84"/>
</g>
<!-- expand boxes -->
<use href="#plus" x="51" y="243" width="9" height="9"/>
<use href="#plus" x="51" y="263" width="9" height="9"/>
<use href="#plus" x="51" y="283" width="9" height="9"/>
<use href="#plus" x="51" y="303" width="9" height="9"/>
<rect x="51.5" y="323.5" width="8" height="8" fill="#fff" stroke="#dcdcdc"/><path d="M53 327.5H58" stroke="#111" stroke-width="1"/>
<!-- clock icon -->
<circle cx="72.5" cy="226.4" r="7" fill="#fff" stroke="#333" stroke-width="1.1"/>
<path d="M72.8 221.6V226.6H69" fill="none" stroke="#333" stroke-width="1.1"/>
<path d="M72.5 219.6V220.8M72.5 232V233.2M65.7 226.4H66.9M78.1 226.4H79.3" stroke="#333" stroke-width="0.9"/>
<!-- modellansichten icon -->
<rect x="65.6" y="239.6" width="15" height="14.8" fill="#fff" stroke="#222" stroke-width="1.1"/>
<path d="M65.6 242.6H80.6" stroke="#222" stroke-width="0.9"/>
<circle cx="75.4" cy="241.1" r="0.5" fill="#222"/><circle cx="77" cy="241.1" r="0.5" fill="#222"/><circle cx="78.6" cy="241.1" r="0.5" fill="#222"/>
<use href="#partS" x="68.4" y="244.6" width="9.4" height="8.6"/>
<!-- check + camera -->
<path d="M66.6 267.4L70.6 272.6L79.4 262" fill="none" stroke="#22dd22" stroke-width="2"/>
<path d="M82.4 262.4L92.6 259.6L94.8 270.4L82.6 273.4Z" fill="none" stroke="#f07c0c" stroke-width="1"/>
<rect x="85" y="263.4" width="6" height="6.6" fill="#8a8a8a" stroke="#555" stroke-width="0.7"/>
<circle cx="92.6" cy="267.4" r="2" fill="#bbb" stroke="#444" stroke-width="0.8"/>
<circle cx="87" cy="265.6" r="1.4" fill="#555"/>
<!-- folders -->
<use href="#folder" x="65.2" y="280.2" width="16" height="12.6"/>
<use href="#folder" x="65.2" y="300.2" width="16" height="12.6"/>
<!-- green ball + squares -->
<circle cx="72.8" cy="326.8" r="6.7" fill="url(#gBall)" stroke="#148a14" stroke-width="0.7"/>
<g fill="none" stroke="#9a9a9a" stroke-width="0.8">
<path d="M81.6 321.2V319.4H83.4M94.8 319.4H96.6V321.2M96.6 332.6V334.4H94.8M83.4 334.4H81.6V332.6"/>
<path d="M82.4 322V332M95.8 322V332M84 320.2H94M84 333.6H94" stroke="#cfcfcf"/>
</g>
<rect x="85.2" y="322.4" width="6.6" height="6.4" fill="#fff" stroke="#444" stroke-width="1"/>
<rect x="88.4" y="325.8" width="6.2" height="6.2" fill="#f07c0c" stroke="#c85a00" stroke-width="0.7"/>
<!-- eyes -->
<use href="#eye" x="84.2" y="342" width="15" height="11"/>
<use href="#eye" x="84.2" y="362" width="15" height="11"/>
<use href="#eye" x="84.2" y="382" width="15" height="11"/>
<use href="#eye" x="84.2" y="402" width="15" height="11"/>
<!-- csys icon pink -->
<g fill="none" stroke="#e0507c" stroke-width="1.1">
<path d="M107.6 341V348M107.6 348L101.6 351.6M107.6 348L113.6 351.6"/>
<path d="M104 345.2L107.6 343.4L111.2 345.2V349.4L107.6 351.4L104 349.4Z"/>
<path d="M106.4 341.6L107.6 339.2L108.8 341.6ZM101 350.4L100.4 352.6L102.8 352.4M114.2 350.4L114.8 352.6L112.4 352.4" fill="#e0507c"/>
</g>
<!-- extrudes -->
<use href="#extr" x="100" y="359.8" width="16" height="14"/>
<use href="#extr" x="100" y="399.8" width="16" height="14"/>
<!-- sketch icon -->
<g fill="none" stroke="#18a8dc" stroke-width="1.1">
<path d="M101.6 394V382.6Q106 379 114.4 379.6"/>
<circle cx="107.4" cy="387.4" r="3.6"/>
<path d="M101.6 387.4H103.8"/>
</g>
<path d="M106.4 392.6L113 385.2L115.6 387.4L109 394.6L105.8 395.2Z" fill="#f0c030" stroke="#222" stroke-width="0.8" stroke-linejoin="round"/>
<path d="M112 386.4L114.6 388.6" stroke="#222" stroke-width="0.8"/>
<path d="M105.8 395.2L106.2 393L107.8 394.6Z" fill="#222"/>
<!-- nav header icon + tab icon -->
<use href="#partS" x="43" y="175.2" width="16" height="15.4"/>
<use href="#partS" x="429.6" y="175.8" width="15.4" height="14.6"/>
<!-- tab doc icon + close -->
<g fill="none" stroke="#fff" stroke-width="1.3">
<path d="M520 183.6V188H514.6V179.6H518"/><path d="M516.6 185.4L521.6 181M519 180.4L522.4 180.6L522.2 183.6" stroke-width="1.2"/>
<path d="M531 179.8L537.4 186.4M537.4 179.8L531 186.4" stroke-width="2"/>
</g>
</svg>
<svg style="left:0;top:0;z-index:4" width="1316" height="780" viewBox="0 0 1316 780">
<defs>
<linearGradient id="gLay" x1="0" y1="0" x2="1" y2="0"><stop offset="0" stop-color="#d0d0d0"/><stop offset="0.45" stop-color="#fafafa"/><stop offset="1" stop-color="#b0b0b0"/></linearGradient>
<linearGradient id="gLay2" x1="0" y1="1" x2="1" y2="0"><stop offset="0" stop-color="#b8b8b8"/><stop offset="1" stop-color="#f6f6f6"/></linearGradient>
<symbol id="eyeL" viewBox="0 0 24 15" overflow="visible">
<path d="M0.6 7.4Q12 -6.2 23.4 7.4Q12 21 0.6 7.4Z" fill="none" stroke="#3a3a3a" stroke-width="1.2"/>
</symbol>
<linearGradient id="gCard" x1="0" y1="0" x2="1" y2="1"><stop offset="0" stop-color="#ffffff"/><stop offset="0.35" stop-color="#b8c4ff"/><stop offset="0.75" stop-color="#2a3cd8"/><stop offset="1" stop-color="#1424a8"/></linearGradient>
</defs>
<!-- 1 caliper/part -->
<g stroke="#222" stroke-width="1" stroke-linejoin="round">
<path d="M257.5 253.4H273V262Q272.6 268.3 266 268.5H257.5Z" fill="#c8c8c8"/>
<path d="M257.5 253.4H260.2V268.5H257.5Z" fill="#9c9c9c" stroke-width="0.7"/>
<circle cx="267.3" cy="261.6" r="4.2" fill="#fff"/>
<path d="M273.7 250.4V246.2L275.3 245.3Q277.2 248 276.9 250.4M273.8 253.2V258.6L276.7 256V253.2" fill="#e8e8e8"/>
<rect x="259.5" y="250.4" width="18" height="2.9" fill="#fff"/>
</g>
<!-- 2 X -->
<path d="M259 278.8L277 296.2M277 278.8L259 296.2" stroke="#3a3a3a" stroke-width="1.1"/>
<!-- 3 ruler -->
<g transform="translate(268 319.2) rotate(-35.5)">
<rect x="-12.4" y="-2.9" width="24.8" height="5.8" fill="#f6f6f6" stroke="#3a3a3a" stroke-width="1.1"/>
<path d="M-10 -2.9V-0.2M-7.5 -2.9V-1M-5 -2.9V-0.2M-2.5 -2.9V-1M0 -2.9V-0.2M2.5 -2.9V-1M5 -2.9V-0.2M7.5 -2.9V-1M10 -2.9V-0.2" stroke="#3a3a3a" stroke-width="0.8"/>
</g>
<!-- 4 shape with arrows -->
<path d="M258.4 343.6H276.6V361.4H258.4Z" fill="none" stroke="#b4b4b4" stroke-width="0.7"/>
<path d="M260 356.6L262.3 348.4Q266 344.8 271.8 345L277 348.8L264.4 358.8Z" fill="url(#gLay2)" stroke="#7a7a7a" stroke-width="0.8" stroke-linejoin="round"/>
<path d="M256.2 345Q260.6 347.4 265.6 345Q270.6 342.2 275 343.4Q278 344 280 345.2" fill="none" stroke="#18a8dc" stroke-width="1.2"/>
<g fill="#fff" stroke="#8a8a8a" stroke-width="0.7"><rect x="257.4" y="342.5" width="2" height="2"/><rect x="275.6" y="342.5" width="2" height="2"/><rect x="257.4" y="360.4" width="2" height="2"/><rect x="275.6" y="360.4" width="2" height="2"/></g>
<path d="M268.4 350.3H274.8V347.3L280 352.1L274.8 357V354H268.4Z" fill="#fff" stroke="#111" stroke-width="1" stroke-linejoin="round"/>
<path d="M275 357H268.6V355L264.2 358.7L268.6 362.4V360.5H275Z" fill="#fff" stroke="#111" stroke-width="1" stroke-linejoin="round"/>
<!-- 5 layers -->
<rect x="256.4" y="373.4" width="23.2" height="23" fill="#e9eef0" stroke="#f02020" stroke-width="1"/>
<ellipse cx="268" cy="393.4" rx="8.6" ry="1.8" fill="#a8a8a8" opacity="0.7"/>
<g stroke="#5a5a5a" stroke-width="0.7" stroke-linejoin="round">
<path d="M258.4 389.2L267.8 386L277.6 389.2L267.8 393Z" fill="url(#gLay)"/>
<path d="M258.4 389.2V390L267.8 393.8L277.6 390V389.2L267.8 393Z" fill="#7a7a7a"/>
<path d="M258.4 385.2L267.8 382L277.6 385.2L267.8 389Z" fill="url(#gLay)"/>
<path d="M258.4 385.2V386L267.8 389.8L277.6 386V385.2L267.8 389Z" fill="#7a7a7a"/>
<path d="M258.4 381.2L267.8 378L277.6 381.2L267.8 385Z" fill="url(#gLay)"/>
<path d="M258.4 381.2V382L267.8 385.8L277.6 382V381.2L267.8 385Z" fill="#7a7a7a"/>
<path d="M258.4 377.4L267.8 374.4L277.6 377.4L267.8 381.2Z" fill="url(#gLay)"/>
<path d="M258.4 377.4V378.2L267.8 382L277.6 378.2V377.4L267.8 381.2Z" fill="#7a7a7a"/>
</g>
<!-- 6 eye + checklist -->
<use href="#eyeL" x="256" y="414.6" width="23" height="14.4"/>
<circle cx="267.4" cy="421.6" r="4.6" fill="#3a3a3a"/>
<rect x="267.6" y="424.8" width="12" height="13.6" fill="#fff" stroke="#222" stroke-width="1"/>
<g fill="none" stroke="#222" stroke-width="0.9"><rect x="269.6" y="426.8" width="2" height="2"/><rect x="269.6" y="434.4" width="2" height="2"/><path d="M269.4 431.6L270.6 432.8L272.2 430.4M273.6 427.8H277.4M273.6 431.6H277.4M273.6 435.4H277.4"/></g>
<!-- 7 crossed eye / eye -->
<path d="M256.3 471.2L279.6 448" stroke="#3a3a3a" stroke-width="1.1"/>
<path d="M256.6 455Q262.6 447.4 270 452.6M256.6 455Q260.6 460.6 265.6 459.4" fill="none" stroke="#3a3a3a" stroke-width="1.1"/>
<circle cx="263" cy="454.6" r="3" fill="none" stroke="#3a3a3a" stroke-width="1"/>
<path d="M264.8 466.8Q272.6 458.6 280 466.8Q272.6 474.6 264.8 466.8Z" fill="none" stroke="#3a3a3a" stroke-width="1.1"/>
<circle cx="272.6" cy="466.6" r="3.3" fill="#3a3a3a"/>
<!-- 8 eye -->
<use href="#eyeL" x="255.8" y="483.4" width="23.4" height="14.4"/>
<circle cx="267.5" cy="490.6" r="4.7" fill="#3a3a3a"/>
<!-- 9 crossed eye -->
<use href="#eyeL" x="255.8" y="516" width="23.4" height="14.8"/>
<circle cx="267.5" cy="523.4" r="4.5" fill="none" stroke="#3a3a3a" stroke-width="1.1"/>
<path d="M256.4 533.6L278 513" stroke="#3a3a3a" stroke-width="1.1"/>
<!-- 10 cyl on block + P= -->
<g id="cylblk">
<path d="M256.4 555.4L265.4 550L277 554.4V558L267.4 564.4L256.4 559.4Z" fill="#8e8e8e" stroke="#4a4a4a" stroke-width="0.8" stroke-linejoin="round"/>
<path d="M256.4 555.4L265.4 550L277 554.4L267.4 560.6Z" fill="#d6d6d6" stroke="#666" stroke-width="0.6" stroke-linejoin="round"/>
<path d="M256.4 555.4L267.4 560.6V564.4L256.4 559.4Z" fill="#bcbcbc"/>
<path d="M261.4 546.2V554.6A5.1 2.3 0 0 0 271.6 554.6V546.2" fill="#e6d2c2" stroke="#f07c0c" stroke-width="1.1"/>
<ellipse cx="266.5" cy="546.2" rx="5.1" ry="2.3" fill="#f0dccc" stroke="#f07c0c" stroke-width="1.1"/>
<path d="M261.4 550.4A5.1 2.3 0 0 0 271.6 550.4" fill="none" stroke="#f07c0c" stroke-width="0.7" opacity="0.7"/>
</g>
<rect x="266.9" y="556.2" width="12.8" height="10.2" fill="#fff" stroke="#111" stroke-width="1.1"/>
<text x="269" y="564" font-family="Liberation Sans, sans-serif" font-size="7.3" font-weight="bold" fill="#111" letter-spacing="0.1">P=</text>
<!-- 11 cyl on block + undo -->
<use href="#cylblk" y="33"/>
<path d="M269.4 589.4H274.4Q278.4 590 278.2 594.2Q277.8 597.4 274.8 598.4" fill="none" stroke="#222" stroke-width="3.6"/>
<path d="M271.4 584.8L266.2 589.4L271.4 594Z" fill="#fff" stroke="#222" stroke-width="1" stroke-linejoin="round"/>
<path d="M269.4 589.4H274.4Q278.4 590 278.2 594.2Q277.8 597.4 275.2 598.2" fill="none" stroke="#fff" stroke-width="1.8"/>
<!-- 12 part + P= + X -->
<use href="#part" x="256" y="609" width="21" height="20"/>
<path d="M259 626L264 614L270 612V620" fill="#707070" opacity="0.6"/>
<path d="M268.2 620.4L278.6 629.6M278.6 620.4L268.2 629.6" stroke="#222" stroke-width="3.8"/>
<path d="M268.2 620.4L278.6 629.6M278.6 620.4L268.2 629.6" stroke="#fff" stroke-width="1.9"/>
<rect x="266.9" y="608" width="12.8" height="10.2" fill="#fff" stroke="#111" stroke-width="1.1"/>
<text x="269" y="615.8" font-family="Liberation Sans, sans-serif" font-size="7.3" font-weight="bold" fill="#111" letter-spacing="0.1">P=</text>
<!-- 13 blue rotating card -->
<path d="M261 650.8L268.6 645.2L276.3 651.4L269.3 657.2Z" fill="url(#gCard)" stroke="#1828b8" stroke-width="1.1" stroke-linejoin="round"/>
<path d="M269.3 657.2L276.3 651.4L276.6 653L269.8 658.8L261.6 652.4L261 650.8Z" fill="#10208a"/>
<g fill="none" stroke="#2a4cf0" stroke-width="1.3" stroke-linejoin="miter">
<path d="M273.4 641L276.2 642L275.6 644.8"/><path d="M276.4 641.6L279.8 643.6L278.4 647.4"/>
<path d="M260.2 660.8L257.4 659.8L258 657"/><path d="M257.2 662.2L253.8 660.2L255.2 656.4" transform="translate(3 0)"/>
</g>
<!-- 14 wrench -->
<path d="M270.2 680.4Q268.6 675.4 273.6 673.4L275 674.2L272.8 678.2L275.2 680.4L278.6 677.6L279.4 679Q278.4 684 273.4 683.2L263.6 693.6Q260.6 696.2 258 693.8Q256 691 258.6 688.4Z" fill="#fff" stroke="#3a3a3a" stroke-width="1.1" stroke-linejoin="round"/>
<circle cx="260.9" cy="690.6" r="1.1" fill="none" stroke="#3a3a3a" stroke-width="0.9"/>
<!-- 15 part + weight -->
<use href="#part" x="256" y="715" width="20" height="20"/>
<path d="M257.6 728L262 717L267 715.6V724" fill="#6a6a6a" opacity="0.55"/>
<path d="M270.6 728.6H277.4L279.8 738.4H268.2Z" fill="#fff" stroke="#111" stroke-width="1.1" stroke-linejoin="round"/>
<circle cx="274" cy="726.6" r="1.8" fill="#fff" stroke="#111" stroke-width="1"/>
</svg>
<div class="dn" style="left:265px;top:402px;"></div>
<div class="dn" style="left:265px;top:700px;"></div>
<div class="t" style="left:259.5px;top:746px;font-size:11px;color:#111;line-height:16px;height:16px;width:60px;transform-origin:0 0;transform:translate(16px,0) rotate(90deg);z-index:6;letter-spacing:0.2px;"><u>O</u>ffset/Fase</div>

<div class="t" style="left:390.8px;top:3.1px;font-size:11px;color:#ffffff;letter-spacing:-0.057px;">Fenster</div>
<div class="t" style="left:4.0px;top:3.8px;font-size:20px;color:#ffffff;letter-spacing:-0.150px;font-weight:bold;letter-spacing:0.6px;transform:scaleX(1.13);transform-origin:0 0;">NX</div>
<div class="t" style="left:977.0px;top:2.9px;font-size:11.5px;color:#ffffff;letter-spacing:0.163px;">NX2412er Serie Projektumgebung n:\ - Konstruktion</div>
<div class="t" style="left:20.4px;top:30.5px;font-size:13px;color:#ffffff;letter-spacing:-0.112px;">Datei</div>
<div class="t" style="left:91.1px;top:30.5px;font-size:13px;color:#ffffff;letter-spacing:-0.142px;">Startseite</div>
<div class="t" style="left:177.0px;top:30.5px;font-size:13px;color:#ffffff;letter-spacing:-0.394px;">Kurve</div>
<div class="t" style="left:242.0px;top:30.5px;font-size:13px;color:#ffffff;letter-spacing:-0.464px;">Flächen</div>
<div class="t" style="left:317.0px;top:30.5px;font-size:13px;color:#ffffff;letter-spacing:0.016px;">Baugruppen</div>
<div class="t" style="left:420.4px;top:30.5px;font-size:13px;color:#ffffff;letter-spacing:-0.436px;">Analyse</div>
<div class="t" style="left:496.0px;top:30.5px;font-size:13px;color:#ffffff;letter-spacing:-0.292px;">Ansicht</div>
<div class="t" style="left:647.0px;top:30.5px;font-size:13px;color:#ffffff;letter-spacing:-0.363px;">Auswahl</div>
<div class="t" style="left:726.2px;top:30.5px;font-size:13px;color:#ffffff;letter-spacing:-0.191px;">Werkzeuge</div>
<div class="t" style="left:822.0px;top:30.5px;font-size:13px;color:#ffffff;letter-spacing:-0.052px;">Anwendung</div>
<div class="t" style="left:921.8px;top:30.5px;font-size:13px;color:#ffffff;letter-spacing:0.026px;">Progressive Die Wizard</div>
<div class="t" style="left:1090.3px;top:30.5px;font-size:13px;color:#ffffff;letter-spacing:-0.108px;">3Dconnexion</div>
<div class="t" style="left:1197.6px;top:30.5px;font-size:13px;color:#ffffff;letter-spacing:-0.228px;">EG-Zusatztools</div>
<div class="t" style="left:569.4px;top:30.5px;font-size:13px;color:#fdd23e;letter-spacing:-0.255px;">Anzeige</div>
<div class="t" style="left:18.8px;top:92.0px;font-size:11px;color:#111;letter-spacing:-0.045px;">Stil</div>
<div class="t" style="left:55.7px;top:93.8px;font-size:11px;color:#111;letter-spacing:-0.335px;">Ray Traced</div>
<div class="t" style="left:65.7px;top:106.8px;font-size:11px;color:#111;letter-spacing:0.233px;">Studio</div>
<div class="t" style="left:132.4px;top:93.8px;font-size:11px;color:#b9b9b9;letter-spacing:0.233px;">Flächenkanten</div>
<div class="t" style="left:226.4px;top:92.5px;font-size:11px;color:#111;letter-spacing:0.031px;">Verdeckte</div>
<div class="t" style="left:228.7px;top:105.6px;font-size:11px;color:#111;letter-spacing:-0.012px;">Kanten</div>
<div class="t" style="left:286.5px;top:92.0px;font-size:11px;color:#111;letter-spacing:0.188px;">Schattierter</div>
<div class="t" style="left:303.8px;top:105.0px;font-size:11px;color:#111;letter-spacing:-1.200px;">Typ</div>
<div class="t" style="left:356.5px;top:92.0px;font-size:11px;color:#111;letter-spacing:0.373px;">Hervorhebung</div>
<div class="t" style="left:442.3px;top:92.0px;font-size:11px;color:#111;letter-spacing:0.193px;">Effekte</div>
<div class="t" style="left:489.3px;top:92.0px;font-size:11px;color:#111;letter-spacing:0.228px;">Weitere</div>
<div class="t" style="left:550.0px;top:94.2px;font-size:11px;color:#111;letter-spacing:0.435px;">Objektdarstellung</div>
<div class="t" style="left:568.7px;top:107.2px;font-size:11px;color:#111;letter-spacing:0.280px;">bearbeiten</div>
<div class="t" style="left:657.9px;top:92.0px;font-size:11px;color:#111;letter-spacing:0.269px;">Darstellung</div>
<div class="t" style="left:728.4px;top:92.0px;font-size:11px;color:#111;letter-spacing:0.122px;">Globales</div>
<div class="t" style="left:730.0px;top:105.0px;font-size:11px;color:#111;letter-spacing:0.276px;">Finish</div>
<div class="t" style="left:790.4px;top:92.0px;font-size:11px;color:#111;letter-spacing:0.501px;">Hintergrund</div>
<div class="t" style="left:865.7px;top:92.0px;font-size:11px;color:#111;letter-spacing:0.185px;">Weitere</div>
<div class="t" style="left:928.5px;top:92.0px;font-size:11px;color:#111;letter-spacing:0.239px;">Bild</div>
<div class="t" style="left:994.3px;top:58.2px;font-size:11px;color:#111;letter-spacing:-0.071px;">Schemas laden</div>
<div class="t" style="left:974.4px;top:81.4px;font-size:11px;color:#b9b9b9;letter-spacing:-0.393px;">Schema</div>
<div class="t" style="left:994.3px;top:105.0px;font-size:11px;color:#b9b9b9;letter-spacing:0.089px;">Schemas entfernen</div>
<div class="t" style="left:1177.0px;top:93.8px;font-size:11px;color:#111;letter-spacing:-0.045px;">Zu Immersiv</div>
<div class="t" style="left:1183.5px;top:106.8px;font-size:11px;color:#111;letter-spacing:0.155px;">wechseln</div>
<div class="t" style="left:1264.2px;top:93.8px;font-size:11px;color:#111;letter-spacing:-0.226px;">Immersive</div>
<div class="t" style="left:1245.2px;top:106.8px;font-size:11px;color:#111;letter-spacing:0.404px;">Voreinstellungen</div>
<div class="t" style="left:32.6px;top:124.6px;font-size:11px;color:#156aa2;letter-spacing:0.048px;">Anzeige</div>
<div class="t" style="left:291.0px;top:124.6px;font-size:11px;color:#156aa2;letter-spacing:0.394px;">Darstellungen</div>
<div class="t" style="left:634.6px;top:124.6px;font-size:11px;color:#156aa2;letter-spacing:0.434px;">Objekt</div>
<div class="t" style="left:824.5px;top:124.6px;font-size:11px;color:#156aa2;letter-spacing:-0.461px;">Szene</div>
<div class="t" style="left:920.7px;top:124.6px;font-size:11px;color:#156aa2;letter-spacing:0.139px;">Bild</div>
<div class="t" style="left:994.3px;top:124.6px;font-size:11px;color:#156aa2;letter-spacing:0.357px;">Darstellungsverwaltung</div>
<div class="t" style="left:1225.4px;top:124.6px;font-size:11px;color:#156aa2;letter-spacing:-0.076px;">Immersiv</div>
<div class="t" style="left:30.0px;top:147.0px;font-size:11px;color:#111;letter-spacing:0.197px;"><u>M</u>enü</div>
<div class="t" style="left:94.8px;top:147.0px;font-size:11px;color:#111;letter-spacing:0.287px;">Kein Auswahlfilter</div>
<div class="t" style="left:311.4px;top:147.0px;font-size:11px;color:#111;letter-spacing:0.408px;">Baugruppe</div>
<div class="t" style="left:314.5px;top:172.6px;font-size:11.5px;color:#111;letter-spacing:-0.119px;">Discovery Center</div>
<div class="t" style="left:449.6px;top:172.5px;font-size:11.5px;color:#ffffff;letter-spacing:0.306px;">model2.prt</div>
<div class="t" style="left:64.0px;top:172.8px;font-size:12px;color:#111;letter-spacing:0.010px;">Teile-Navigator</div>
<div class="t" style="left:52.5px;top:197.3px;font-size:12px;color:#111;letter-spacing:-0.129px;">Name</div>
<div class="t" style="left:84.8px;top:216.8px;font-size:12px;color:#1a1a1a;letter-spacing:0.194px;max-width:138.2px;overflow:hidden;">Historien-Konstruktionsm</div>
<div class="t" style="left:84.8px;top:236.8px;font-size:12px;color:#1a1a1a;letter-spacing:-0.056px;max-width:138.2px;overflow:hidden;">Modellansichten (Reihenfo</div>
<div class="t" style="left:100.1px;top:256.8px;font-size:12px;color:#1a1a1a;letter-spacing:-0.447px;max-width:122.9px;overflow:hidden;">Kameras</div>
<div class="t" style="left:84.8px;top:276.8px;font-size:12px;color:#1a1a1a;letter-spacing:-0.247px;max-width:138.2px;overflow:hidden;">Benutzerausdrücke</div>
<div class="t" style="left:84.8px;top:296.8px;font-size:12px;color:#1a1a1a;letter-spacing:-0.537px;max-width:138.2px;overflow:hidden;">Reference Sets</div>
<div class="t" style="left:100.1px;top:316.8px;font-size:12px;color:#1a1a1a;letter-spacing:0.132px;max-width:122.9px;overflow:hidden;">Modellhistorie</div>
<div class="t" style="left:119.5px;top:336.8px;font-size:12px;color:#1a1a1a;letter-spacing:-0.208px;max-width:103.5px;overflow:hidden;">Bezugskoordinatens</div>
<div class="t" style="left:119.5px;top:356.8px;font-size:12px;color:#1a1a1a;letter-spacing:-0.328px;max-width:103.5px;overflow:hidden;">Extrudieren (24)</div>
<div class="t" style="left:119.5px;top:376.8px;font-size:12px;color:#1a1a1a;letter-spacing:-0.858px;max-width:103.5px;overflow:hidden;">"SKETCH_001"</div>
<div class="t" style="left:119.5px;top:396.8px;font-size:12px;color:#1a1a1a;letter-spacing:-0.079px;font-weight:bold;">Extrudieren (26)</div>
<div class="t" style="left:68.7px;top:447.1px;font-size:13.5px;color:#0f6a92;letter-spacing:-0.516px;">Suchen</div>
<div class="t" style="left:68.7px;top:469.9px;font-size:13.5px;color:#0f6a92;letter-spacing:0.130px;">Abhängigkeiten</div>
<div class="t" style="left:68.7px;top:492.9px;font-size:13.5px;color:#0f6a92;letter-spacing:-0.138px;">Details</div>
<div class="t" style="left:57.0px;top:518.5px;font-size:11.5px;color:#111;letter-spacing:0.035px;">Parameter</div>
<div class="t" style="left:145.5px;top:518.5px;font-size:11.5px;color:#111;letter-spacing:0.105px;">Wert</div>
<div class="t" style="left:193.0px;top:518.5px;font-size:11.5px;color:#111;letter-spacing:0.194px;">Ausdru.</div>
<div class="t" style="left:253.6px;top:136.0px;font-size:11px;color:#1a1a1a;letter-spacing:0.282px;z-index:21;">Unsichtbar</div>
<div class="t" style="left:253.6px;top:168.8px;font-size:11px;color:#1a1a1a;letter-spacing:0.061px;z-index:21;">Körper</div>
<div class="t" style="left:253.6px;top:201.8px;font-size:11px;color:#1a1a1a;letter-spacing:0.529px;z-index:21;max-width:78px;overflow:hidden;">Gestrichelt</div>
<div class="t" style="left:362.6px;top:213.3px;font-size:12px;color:#000;letter-spacing:-0.224px;font-weight:bold;z-index:31;">Körper</div>
<div class="t" style="left:362.6px;top:233.3px;font-size:11.5px;color:#1a1a1a;letter-spacing:0.122px;z-index:31;">Zeigt verdeckte Kanten schattierter Flächen mit einer</div>
<div class="t" style="left:362.6px;top:247.5px;font-size:11.5px;color:#1a1a1a;letter-spacing:0.106px;z-index:31;">durchgezogenen Linie an.</div>
<div class="t" style="left:926.5px;top:435.6px;font-size:11.5px;color:#a06060;letter-spacing:1.328px;">Y</div>
<div class="t" style="left:881.5px;top:496.5px;font-size:11.5px;color:#a06060;letter-spacing:0.828px;">X</div>
<div class="t" style="left:1006.5px;top:495.0px;font-size:11.5px;color:#a06060;letter-spacing:1.469px;">Z</div>
</body></html>
